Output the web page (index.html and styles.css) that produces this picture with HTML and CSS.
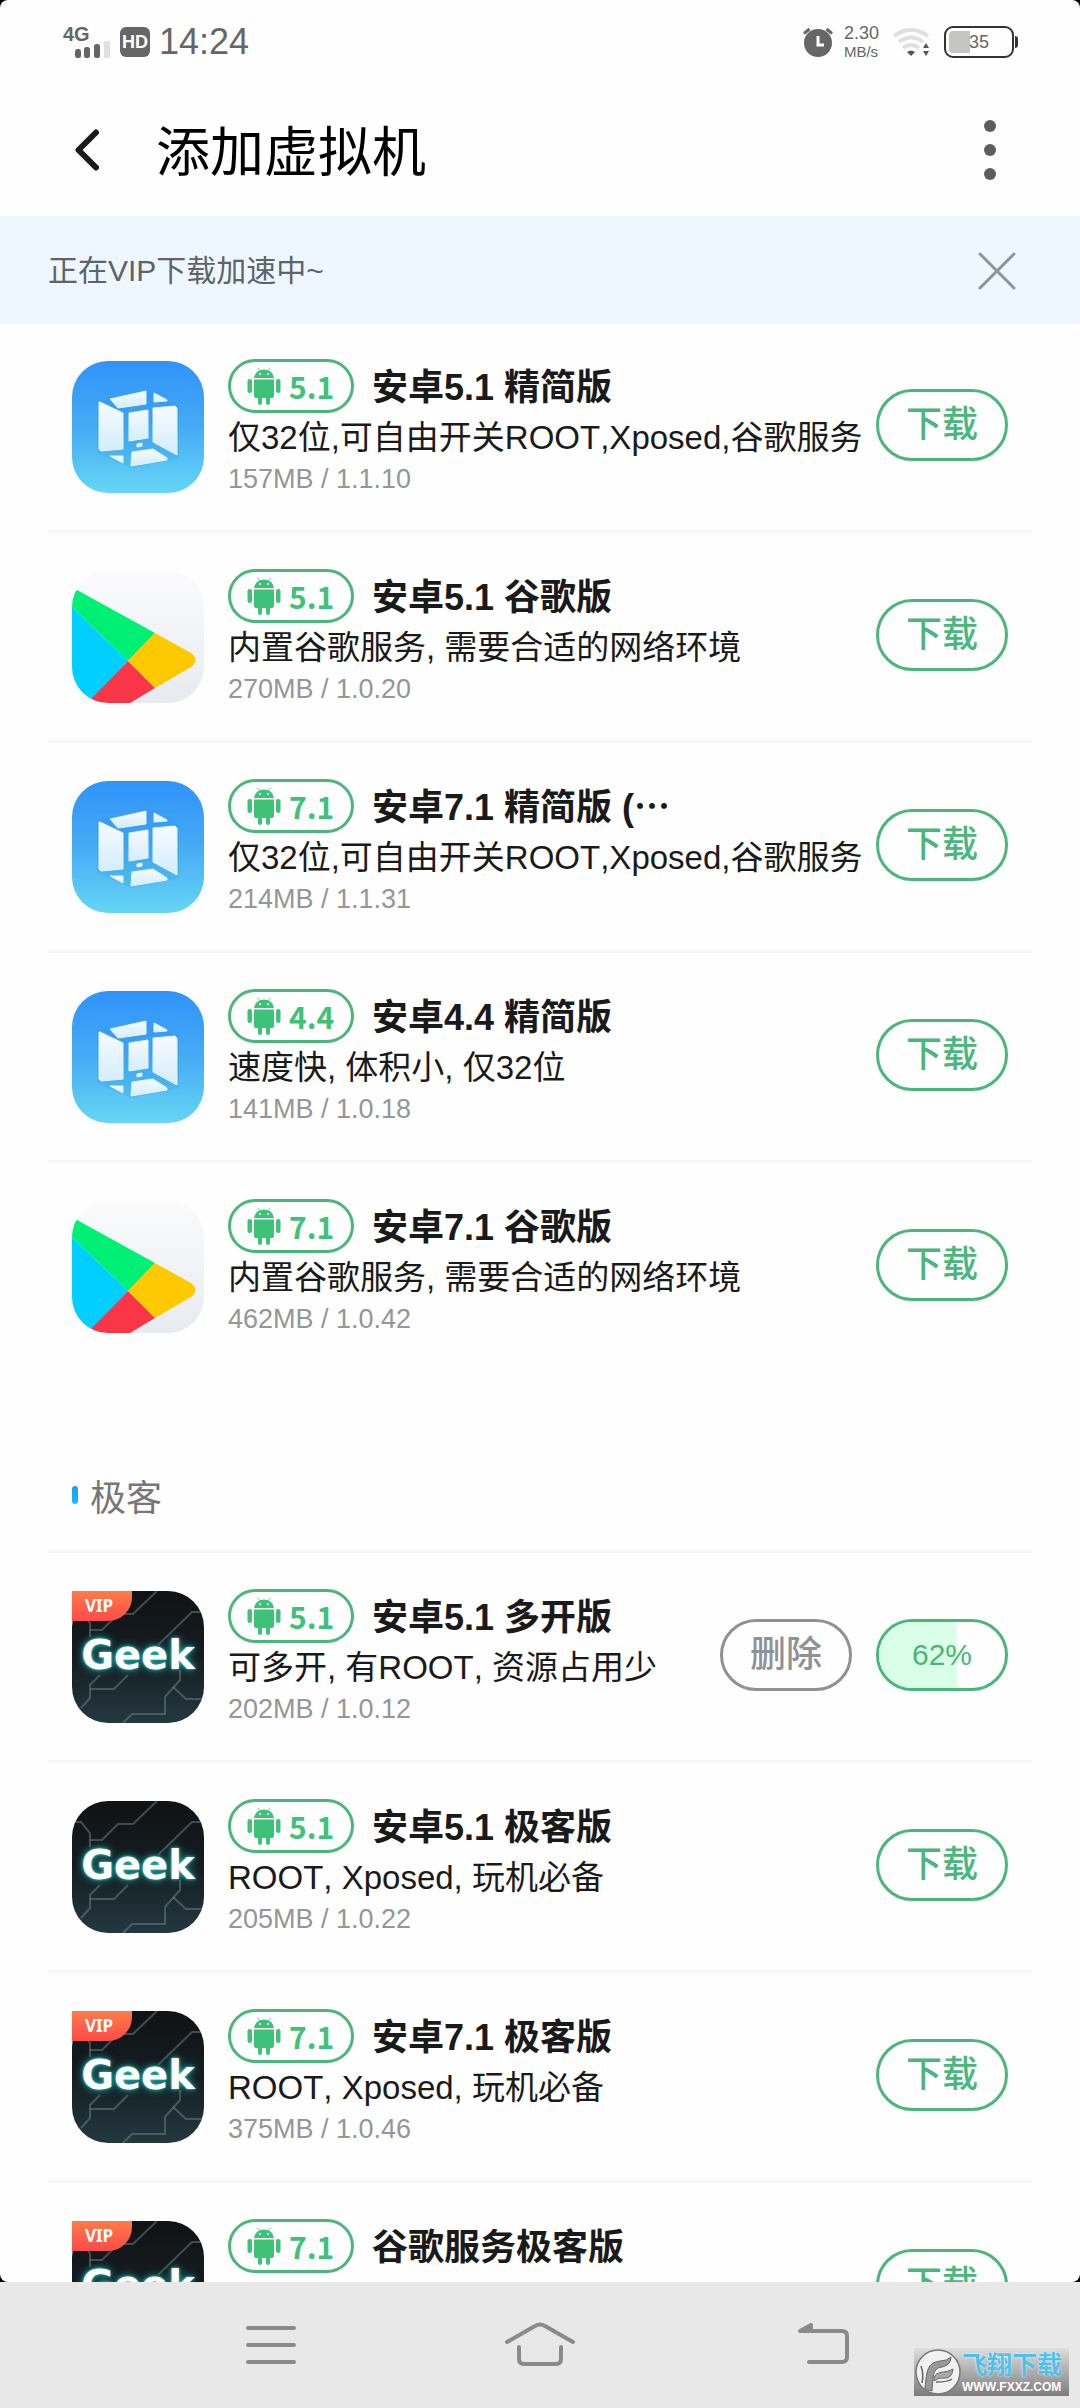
FILE: index.html
```
<!DOCTYPE html>
<html lang="zh-CN">
<head>
  <meta charset="UTF-8">
  <meta name="viewport" content="width=device-width, initial-scale=1.0">
  <title>添加虚拟机</title>
  <link rel="stylesheet" href="styles.css">
</head>
<body>
  <!-- Shared icons -->
  <svg class="sprite" aria-hidden="true">
    <defs>
      <linearGradient id="vm-bg" x1="0" y1="0" x2="0" y2="1">
        <stop offset="0" stop-color="#3093fa"/>
        <stop offset="0.5" stop-color="#46abf4"/>
        <stop offset="1" stop-color="#65d6f4"/>
      </linearGradient>
      <linearGradient id="vm-face" x1="0" y1="0" x2="0" y2="1">
        <stop offset="0" stop-color="#f6fbff"/>
        <stop offset="1" stop-color="#d3edfd"/>
      </linearGradient>
      <linearGradient id="play-bg" x1="0" y1="0" x2="0" y2="1">
        <stop offset="0" stop-color="#fbfbfc"/>
        <stop offset="1" stop-color="#e7ebf0"/>
      </linearGradient>
      <linearGradient id="geek-bg" x1="0" y1="0" x2="0" y2="1">
        <stop offset="0" stop-color="#101214"/>
        <stop offset="0.5" stop-color="#151d22"/>
        <stop offset="1" stop-color="#22393f"/>
      </linearGradient>
    </defs>
    <symbol id="vm" viewBox="0 0 132 132">
      <rect width="132" height="132" fill="url(#vm-bg)"/>
      <g fill="#1678cf" opacity="0.12" stroke="#1678cf" stroke-width="6" stroke-linejoin="round">
        <path d="M28 42L74 32 104 46V95L60 104 28 90z"/>
      </g>
      <g fill="url(#vm-face)" stroke="#e4f4ff" stroke-width="1" stroke-linejoin="round">
        <path d="M38 38L74 30V43L46 47z"/>
        <path d="M82 32L95 39V40L82 41z"/>
        <path d="M28 41L51 52V88L29 90 27 88V41z"/>
        <path d="M57 52L76 49V77L57 80z"/>
        <path d="M81 47L103 45 105 47V94L81 81z"/>
        <path d="M65 83L70 82V85L65 86z"/>
        <path d="M60 91L81 88 95 97V99L59 105z"/>
        <path d="M38 95H51V102z"/>
      </g>
    </symbol>
    <symbol id="play" viewBox="0 0 132 132">
      <rect width="132" height="132" fill="url(#play-bg)"/>
      <path fill="#00f076" d="M0 36V28Q2 20 5 19L83 62 56 90z"/>
      <path fill="#00cfff" d="M0 36L56 90 16 132H0z"/>
      <path fill="#f93647" d="M56 90L83 117 58 132H15z"/>
      <path fill="#ffc900" d="M83 62L119 82Q128 89 119 96L83 117 56 90z"/>
    </symbol>
    <symbol id="geek" viewBox="0 0 132 132">
      <rect width="132" height="132" fill="url(#geek-bg)"/>
      <g fill="none" stroke="#7f8d92" stroke-opacity="0.45" stroke-width="2">
        <path d="M85 0L61 23H46L30 39H18"/>
        <path d="M2 21H9L18 32V46"/>
        <path d="M132 21H120L86 54"/>
        <path d="M28 84L18 94V107L9 117"/>
        <path d="M18 98H42L56 84"/>
        <path d="M51 132L60 123H93V106L108 89V79"/>
        <path d="M101 96L114 108H132"/>
      </g>
    </symbol>
    <symbol id="android" viewBox="0 0 34 38">
      <path d="M7 11Q8 3 17 2.500Q26 3 27 11z"/>
      <path d="M10.500 0.500L13 4M23.500 0.500L21 4" stroke="currentColor" stroke-width="0.800"/>
      <circle cx="13" cy="7" r="0.900" fill="#fff"/>
      <circle cx="21" cy="7" r="0.900" fill="#fff"/>
      <path d="M7 12.500H27V29Q27 31 25 31H23V36A2 2 0 0 1 19 36V31H15V36A2 2 0 0 1 11 36V31H9Q7 31 7 29z"/>
      <rect x="0.500" y="12" width="4.500" height="14" rx="2.200"/>
      <rect x="29" y="12" width="4.500" height="14" rx="2.200"/>
    </symbol>
  </svg>

  <div class="screen">
    <div class="app">
      <div class="status-bar">
        <div class="status-left">
          <div class="signal">
            <span class="network">4G</span>
            <svg class="bars" viewBox="0 0 36 17">
              <g fill="#666">
                <rect x="0" y="8" width="6" height="9" rx="2.500"/>
                <rect x="9" y="6" width="6" height="11" rx="2.500"/>
                <rect x="19" y="3" width="6" height="14" rx="2.500"/>
              </g>
              <rect x="29" y="0" width="6" height="17" rx="1" fill="#e0e0e0"/>
            </svg>
          </div>
          <span class="hd">HD</span>
          <span class="time">14:24</span>
        </div>
        <div class="status-right">
          <svg class="alarm" viewBox="0 0 30 30">
            <circle cx="15" cy="16" r="14" fill="#666"/>
            <path d="M1 6.500L6.500 2M29 6.500L23.500 2" stroke="#666" stroke-width="3" fill="none"/>
            <path d="M15 9V18H21" stroke="#fff" stroke-width="3" fill="none"/>
          </svg>
          <div class="speed"><span class="rate">2.30</span><span class="unit">MB/s</span></div>
          <svg class="wifi" viewBox="0 0 36 28">
            <g fill="none" stroke="#e0e0e0" stroke-width="4">
              <path d="M1 8Q18-4 35 8"/>
              <path d="M6 14Q18 5 30 14"/>
              <path d="M10 20Q18 14 26 20"/>
            </g>
            <path d="M14 24Q18 21 22 24L18 28z" fill="#555"/>
            <path d="M30 20L33 15 36 20zM30 23L33 28 36 23z" fill="#555"/>
          </svg>
          <div class="battery">
            <span class="level"></span>
            <span class="percent">35</span>
          </div>
        </div>
      </div>

      <header class="header">
        <button class="icon-button" aria-label="返回">
          <svg class="back" viewBox="0 0 24 42"><path d="M21 3.500L3.500 21 21 38.500"/></svg>
        </button>
        <h1>添加虚拟机</h1>
        <button class="icon-button" aria-label="更多">
          <svg class="more" viewBox="0 0 12 60">
            <circle cx="6" cy="6" r="6"/><circle cx="6" cy="30" r="6"/><circle cx="6" cy="54" r="6"/>
          </svg>
        </button>
      </header>

      <div class="banner">
        <p>正在VIP下载加速中~</p>
        <button class="icon-button" aria-label="关闭">
          <svg class="close" viewBox="0 0 38 38"><path d="M2 2L36 36M36 2L2 36"/></svg>
        </button>
      </div>

      <main class="content">
        <ul class="rom-list">
          <li class="rom">
            <div class="rom-icon"><svg><use href="#vm"/></svg></div>
            <div class="info">
              <div class="title-row">
                <span class="version"><svg><use href="#android"/></svg>5.1</span>
                <h2>安卓5.1 精简版</h2>
              </div>
              <p class="desc">仅32位,可自由开关ROOT,Xposed,谷歌服务</p>
              <p class="meta">157MB / 1.1.10</p>
            </div>
            <div class="actions"><button class="pill">下载</button></div>
          </li>
          <li class="rom">
            <div class="rom-icon"><svg><use href="#play"/></svg></div>
            <div class="info">
              <div class="title-row">
                <span class="version"><svg><use href="#android"/></svg>5.1</span>
                <h2>安卓5.1 谷歌版</h2>
              </div>
              <p class="desc">内置谷歌服务, 需要合适的网络环境</p>
              <p class="meta">270MB / 1.0.20</p>
            </div>
            <div class="actions"><button class="pill">下载</button></div>
          </li>
          <li class="rom">
            <div class="rom-icon"><svg><use href="#vm"/></svg></div>
            <div class="info">
              <div class="title-row">
                <span class="version"><svg><use href="#android"/></svg>7.1</span>
                <h2>安卓7.1 精简版 (<span class="ellipsis">…</span></h2>
              </div>
              <p class="desc">仅32位,可自由开关ROOT,Xposed,谷歌服务</p>
              <p class="meta">214MB / 1.1.31</p>
            </div>
            <div class="actions"><button class="pill">下载</button></div>
          </li>
          <li class="rom">
            <div class="rom-icon"><svg><use href="#vm"/></svg></div>
            <div class="info">
              <div class="title-row">
                <span class="version"><svg><use href="#android"/></svg>4.4</span>
                <h2>安卓4.4 精简版</h2>
              </div>
              <p class="desc">速度快, 体积小, 仅32位</p>
              <p class="meta">141MB / 1.0.18</p>
            </div>
            <div class="actions"><button class="pill">下载</button></div>
          </li>
          <li class="rom">
            <div class="rom-icon"><svg><use href="#play"/></svg></div>
            <div class="info">
              <div class="title-row">
                <span class="version"><svg><use href="#android"/></svg>7.1</span>
                <h2>安卓7.1 谷歌版</h2>
              </div>
              <p class="desc">内置谷歌服务, 需要合适的网络环境</p>
              <p class="meta">462MB / 1.0.42</p>
            </div>
            <div class="actions"><button class="pill">下载</button></div>
          </li>
        </ul>

        <h3 class="section-title">极客</h3>

        <ul class="rom-list geek-list">
          <li class="rom">
            <div class="rom-icon">
              <svg><use href="#geek"/></svg>
              <span class="geek">Geek</span>
              <span class="vip">VIP</span>
            </div>
            <div class="info">
              <div class="title-row">
                <span class="version"><svg><use href="#android"/></svg>5.1</span>
                <h2>安卓5.1 多开版</h2>
              </div>
              <p class="desc">可多开, 有ROOT, 资源占用少</p>
              <p class="meta">202MB / 1.0.12</p>
            </div>
            <div class="actions">
              <button class="pill delete">删除</button>
              <button class="pill progress"><span class="fill" style="width: 62%"></span><span class="value">62%</span></button>
            </div>
          </li>
          <li class="rom">
            <div class="rom-icon">
              <svg><use href="#geek"/></svg>
              <span class="geek">Geek</span>
            </div>
            <div class="info">
              <div class="title-row">
                <span class="version"><svg><use href="#android"/></svg>5.1</span>
                <h2>安卓5.1 极客版</h2>
              </div>
              <p class="desc">ROOT, Xposed, 玩机必备</p>
              <p class="meta">205MB / 1.0.22</p>
            </div>
            <div class="actions"><button class="pill">下载</button></div>
          </li>
          <li class="rom">
            <div class="rom-icon">
              <svg><use href="#geek"/></svg>
              <span class="geek">Geek</span>
              <span class="vip">VIP</span>
            </div>
            <div class="info">
              <div class="title-row">
                <span class="version"><svg><use href="#android"/></svg>7.1</span>
                <h2>安卓7.1 极客版</h2>
              </div>
              <p class="desc">ROOT, Xposed, 玩机必备</p>
              <p class="meta">375MB / 1.0.46</p>
            </div>
            <div class="actions"><button class="pill">下载</button></div>
          </li>
          <li class="rom">
            <div class="rom-icon">
              <svg><use href="#geek"/></svg>
              <span class="geek">Geek</span>
              <span class="vip">VIP</span>
            </div>
            <div class="info">
              <div class="title-row">
                <span class="version"><svg><use href="#android"/></svg>7.1</span>
                <h2>谷歌服务极客版</h2>
              </div>
            </div>
            <div class="actions"><button class="pill">下载</button></div>
          </li>
        </ul>
      </main>
    </div>

    <nav class="nav-bar">
      <button aria-label="菜单">
        <svg viewBox="0 0 80 50"><path d="M17 8H63M17 25H63M17 42H63"/></svg>
      </button>
      <button aria-label="主页">
        <svg viewBox="0 0 80 50"><path d="M7 22L35 6Q40 3 45 6L73 22M19 27V39Q19 44 24 44H56Q61 44 61 39V27"/></svg>
      </button>
      <button aria-label="后退">
        <svg viewBox="0 0 80 50">
          <path d="M33 11H73Q78 11 78 16V37Q78 42 73 42H40"/>
          <path class="solid" d="M31 11L42 5V11z"/>
        </svg>
      </button>
    </nav>

    <div class="watermark">
      <svg viewBox="0 0 48 48">
        <circle cx="24" cy="24" r="22" fill="#f1f1f1" stroke="#777" stroke-width="1.500"/>
        <path fill="#999" stroke="#666" stroke-width="1" d="M11 40C13 22 13 15 26 13Q33 13 37 9Q37 17 28 19C18 20 19 30 18 43Q14 43 11 40z"/>
        <path fill="#aaa" stroke="#666" stroke-width="1" d="M20 30C22 22 31 26 39 21Q38 31 30 30Q25 29 20 33z"/>
        <path fill="none" stroke="#666" stroke-width="1.500" d="M7 18Q10 26 8 35M22 34Q34 34 38 31"/>
      </svg>
      <div class="watermark-text">
        <span class="site-name">飞翔下载</span>
        <span class="site-url">WWW.FXXZ.COM</span>
      </div>
    </div>
  </div>
</body>
</html>
```

FILE: styles.css
```
* {
  box-sizing: border-box;
}
body {
  margin: 0;
  font-family: "Liberation Sans", "Noto Sans CJK SC", sans-serif;
  font-kerning: none;
  color: #1a1a1a;
}
h1, h2, h3, p, ul {
  margin: 0;
  padding: 0;
}
ul {
  list-style: none;
}
button {
  font-family: inherit;
  padding: 0;
  border: none;
  background: none;
  cursor: pointer;
}
svg {
  display: block;
}
.sprite {
  position: absolute;
  width: 0;
  height: 0;
}
.screen {
  position: relative;
  display: flex;
  flex-direction: column;
  height: 100vh;
  overflow: hidden;
  background: #000;
}
.app {
  flex: 1;
  min-height: 0;
  display: flex;
  flex-direction: column;
  overflow: hidden;
  background: #fefefe;
  border-radius: 8px;
}

/* Status bar */
.status-bar {
  flex: none;
  display: flex;
  justify-content: space-between;
  align-items: center;
  height: 84px;
  padding: 0 62px 0 63px;
  color: #666;
}
.status-left,
.status-right {
  display: flex;
  align-items: center;
}
.signal {
  display: flex;
  flex-direction: column;
  width: 48px;
}
.network {
  font-size: 20px;
  line-height: 14px;
  font-weight: bold;
}
.bars {
  width: 36px;
  height: 17px;
  margin-left: 12px;
}
.hd {
  width: 30px;
  height: 30px;
  margin: 0 9px;
  border-radius: 6px;
  background: #666;
  color: #fff;
  font-size: 18px;
  line-height: 30px;
  font-weight: bold;
  text-align: center;
}
.time {
  font-size: 36px;
  line-height: 40px;
}
.alarm {
  width: 30px;
  height: 30px;
}
.speed {
  display: flex;
  flex-direction: column;
  margin: 0 14px 0 11px;
}
.rate {
  font-size: 18px;
  line-height: 20px;
}
.unit {
  font-size: 15px;
  line-height: 18px;
}
.wifi {
  width: 36px;
  height: 28px;
}
.battery {
  position: relative;
  display: flex;
  align-items: center;
  width: 70px;
  height: 32px;
  margin-left: 15px;
  margin-right: 4px;
  padding: 3px;
  border: 2px solid #333;
  border-radius: 9px;
}
.battery::after {
  content: "";
  position: absolute;
  right: -6px;
  top: 8px;
  width: 3px;
  height: 12px;
  background: #333;
  border-radius: 0 3px 3px 0;
}
.level {
  width: 35%;
  height: 22px;
  background: #c5c6c3;
  border-radius: 4px 0 0 4px;
}
.percent {
  position: absolute;
  left: 0;
  right: 0;
  font-size: 18px;
  line-height: 20px;
  text-align: center;
}

/* Header */
.header {
  flex: none;
  display: flex;
  align-items: center;
  height: 132px;
  padding: 0 84px 0 75px;
}
.header h1 {
  flex: 1;
  margin-left: 57px;
  padding-top: 6px;
  font-size: 54px;
  line-height: 64px;
  font-weight: normal;
  color: #000;
}
.back {
  width: 24px;
  height: 42px;
  fill: none;
  stroke: #1a1a1a;
  stroke-width: 6;
  stroke-linecap: round;
  stroke-linejoin: round;
}
.more {
  width: 12px;
  height: 60px;
  fill: #5b5e60;
}

/* Banner */
.banner {
  flex: none;
  display: flex;
  justify-content: space-between;
  align-items: center;
  height: 108px;
  padding: 2px 64px 0 48px;
  background: #eef7ff;
}
.banner p {
  font-size: 30px;
  line-height: 36px;
  color: #5d6368;
}
.close {
  width: 38px;
  height: 38px;
  fill: none;
  stroke: #8b959c;
  stroke-width: 3;
  stroke-linecap: round;
}

/* List */
.content {
  flex: 1;
  min-height: 0;
  overflow: hidden;
  padding: 0 48px;
}
.rom {
  display: flex;
  align-items: center;
  padding: 35px 24px;
}
.rom + .rom,
.geek-list .rom {
  padding-top: 36px;
  border-top: 3px solid #f6f6f6;
}
.rom-icon {
  position: relative;
  flex: none;
  width: 132px;
  height: 132px;
  margin-right: 24px;
}
.rom-icon svg {
  width: 132px;
  height: 132px;
  border-radius: 36px;
}
.geek {
  position: absolute;
  left: 0;
  right: 0;
  top: 40px;
  color: #fff;
  font-family: "DejaVu Sans", sans-serif;
  font-size: 40px;
  line-height: 48px;
  font-weight: bold;
  text-align: center;
  text-shadow: 0 0 3px #35d6d0, 0 0 8px #1fa9a8;
}
.vip {
  position: absolute;
  left: 0;
  top: 0;
  width: 60px;
  height: 30px;
  background: linear-gradient(#ff7b47, #fd4b4b);
  border-bottom-right-radius: 24px;
  color: #fff;
  font-family: "Noto Sans", sans-serif;
  font-size: 17px;
  line-height: 30px;
  font-weight: bold;
  text-align: center;
  padding-right: 6px;
}
.info {
  flex: 1;
  min-width: 0;
  min-height: 136px;
}
.title-row {
  display: flex;
  align-items: center;
  height: 54px;
}
.version {
  flex: none;
  display: flex;
  align-items: center;
  gap: 8px;
  width: 126px;
  height: 54px;
  margin-right: 18px;
  padding-left: 16px;
  border: 3px solid #4bb67c;
  border-radius: 27px;
  color: #3dc278;
  font-family: "Noto Sans CJK SC", sans-serif;
  font-size: 30px;
  line-height: 46px;
  font-weight: bold;
}
.version svg {
  width: 34px;
  height: 38px;
  fill: currentColor;
}
.info h2 {
  padding-top: 4px;
  font-size: 36px;
  line-height: 50px;
  font-weight: bold;
  white-space: nowrap;
}
.ellipsis {
  font-family: "Noto Sans CJK SC", sans-serif;
  line-height: 1;
}
.desc {
  font-size: 33px;
  line-height: 50px;
  white-space: nowrap;
}
.meta {
  font-size: 27px;
  line-height: 32px;
  color: #949698;
}
.actions {
  flex: none;
  display: flex;
  gap: 24px;
  padding-bottom: 4px;
}
.pill {
  position: relative;
  width: 132px;
  height: 72px;
  border: 3px solid #4bb67c;
  border-radius: 36px;
  overflow: hidden;
  color: #4bb67c;
  font-size: 36px;
  line-height: 66px;
  font-weight: 500;
}
.delete {
  border-color: #8f9194;
  color: #8f9194;
}
.progress {
  font-size: 30px;
  font-weight: normal;
}
.fill {
  position: absolute;
  left: 0;
  top: 0;
  bottom: 0;
  background: #d9ffe9;
}
.value {
  position: relative;
}

.section-title {
  display: flex;
  align-items: center;
  gap: 12px;
  height: 105px;
  margin: 72px 0 3px;
  padding-left: 24px;
  font-size: 36px;
  font-weight: normal;
  color: #777;
}
.section-title::before {
  content: "";
  width: 6px;
  height: 18px;
  border-radius: 3px;
  background: linear-gradient(#2098f8, #14c0fb);
}

/* Navigation */
.nav-bar {
  flex: none;
  display: flex;
  height: 126px;
  padding: 0 136px;
  background: #e8e8e8;
}
.nav-bar button {
  flex: 1;
  display: flex;
  justify-content: center;
  align-items: center;
}
.nav-bar svg {
  width: 80px;
  height: 50px;
  fill: none;
  stroke: #8a8a8a;
  stroke-width: 4;
  stroke-linecap: round;
  stroke-linejoin: round;
}
.nav-bar .solid {
  fill: #8a8a8a;
}

/* Watermark */
.watermark {
  position: absolute;
  right: 11px;
  bottom: 12px;
  display: flex;
  width: 155px;
  height: 48px;
  background: linear-gradient(#dedede, #7c7c7c);
}
.watermark svg {
  flex: none;
  width: 48px;
  height: 48px;
}
.watermark-text {
  display: flex;
  flex-direction: column;
  justify-content: center;
  white-space: nowrap;
}
.site-name {
  color: #4fc0ea;
  font-size: 25px;
  line-height: 30px;
  font-weight: bold;
  text-shadow: 0 0 2px #fff;
}
.site-url {
  color: #fff;
  font-size: 12px;
  line-height: 14px;
  font-weight: bold;
}
```
